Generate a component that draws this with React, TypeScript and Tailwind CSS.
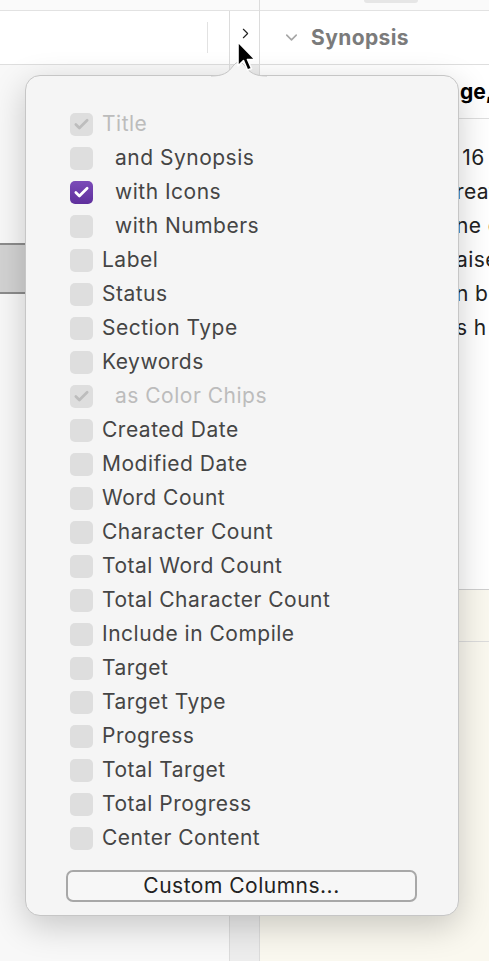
import { Check, ChevronDown, ChevronRight } from "lucide-react";

type Item = { label: string; indent?: boolean; checked?: boolean; disabled?: boolean };

const items: Item[] = [
  { label: "Title", checked: true, disabled: true },
  { label: "and Synopsis", indent: true },
  { label: "with Icons", indent: true, checked: true },
  { label: "with Numbers", indent: true },
  { label: "Label" },
  { label: "Status" },
  { label: "Section Type" },
  { label: "Keywords" },
  { label: "as Color Chips", indent: true, checked: true, disabled: true },
  { label: "Created Date" },
  { label: "Modified Date" },
  { label: "Word Count" },
  { label: "Character Count" },
  { label: "Total Word Count" },
  { label: "Total Character Count" },
  { label: "Include in Compile" },
  { label: "Target" },
  { label: "Target Type" },
  { label: "Progress" },
  { label: "Total Target" },
  { label: "Total Progress" },
  { label: "Center Content" },
];

// fragments of the synopsis text that peek out right of the popover
const synopsisLines = [" 16", "reat", "ne c", "aise", "n br", "s h"];

function Box({ item }: { item: Item }) {
  if (item.checked && !item.disabled) {
    return (
      <span className="flex h-[23px] w-[23px] shrink-0 items-center justify-center rounded-[5px] bg-gradient-to-b from-[#7b4bb8] to-[#5f2f9c]">
        <Check className="h-[17px] w-[17px] text-white" strokeWidth={3.8} />
      </span>
    );
  }
  return (
    <span className="flex h-[23px] w-[23px] shrink-0 items-center justify-center rounded-[5px] bg-[#dedede]">
      {item.checked && <Check className="h-[17px] w-[17px] text-[#bdbdbd]" strokeWidth={3.8} />}
    </span>
  );
}

export default function App() {
  return (
    <div className="relative h-[961px] w-[489px] overflow-hidden bg-white font-['Inter',sans-serif]">
      <div className="flex h-full">
        {/* left group: binder + strip */}
        <div className="flex w-[260px] shrink-0 flex-col border-r border-[#dcdcdc]">
          <div className="h-[11px] shrink-0 border-b border-[#e2e2e2] bg-[#fafafa]" />
          <div className="flex flex-1">
            <div className="flex w-[230px] shrink-0 flex-col border-r border-[#dcdcdc]">
              <div className="flex h-[54px] shrink-0 items-center justify-end border-b border-[#dedede] bg-white pr-[21px]">
                <div className="h-[31px] w-px bg-[#e2e2e2]" />
              </div>
              <div className="flex-1 bg-[#f8f8f8] pt-[178px]">
                <div className="h-[51px] border-y-2 border-[#8c8c8c] bg-[#d3d3d3]" />
              </div>
            </div>
            <div className="flex flex-1 flex-col">
              <div className="flex h-[54px] shrink-0 items-start justify-center border-b border-[#dedede] bg-white pt-[14px] pl-[1px]">
                <ChevronRight className="h-[17px] w-[17px] text-[#222]" strokeWidth={1.6} />
              </div>
              <div className="flex-1 bg-[#ededed]" />
            </div>
          </div>
        </div>

        {/* right pane: synopsis */}
        <div className="flex flex-1 flex-col">
          <div className="h-[11px] shrink-0 border-b border-[#e2e2e2] bg-[#fafafa] pl-[104px]">
            <div className="h-[3px] w-[54px] rounded-b-[6px] bg-[#e6e6e6]" />
          </div>
          <div className="flex h-[54px] shrink-0 items-center gap-[10px] border-b border-[#dedede] bg-white pl-[22px]">
            <ChevronDown className="h-[19px] w-[19px] text-[#a6a6a6]" strokeWidth={2} />
            <span className="text-[21px] font-bold tracking-[0.4px] text-[#7b7b7b]">Synopsis</span>
          </div>
          <div className="flex h-[54px] shrink-0 items-center border-b border-[#dedede] pl-[200px] text-[21px] font-bold whitespace-nowrap text-black">
            ge,
          </div>
          <div className="flex h-[471px] shrink-0 flex-col border-b border-[#cfcfcf] pt-[22px]">
            {synopsisLines.map((line) => (
              <div key={line} className="h-[34px] pl-[196px] text-[21px] leading-[34px] tracking-[0.4px] whitespace-pre text-[#222]">
                {line}
              </div>
            ))}
          </div>
          <div className="h-[52px] shrink-0 border-b border-[#dcdcdc] bg-[#faf8ef]" />
          <div className="flex-1 bg-[#faf8ef]" />
        </div>
      </div>

      {/* popover */}
      <div className="absolute top-[75px] left-[25px] flex h-[841px] w-[434px] flex-col rounded-[15px] border border-[#c6c6c6] bg-[#f5f5f5] pt-[31px] shadow-[0_10px_34px_rgba(0,0,0,0.2)]">
        <div className="flex flex-col pl-[44px]">
          {items.map((item) => (
            <div key={item.label} className="flex h-[34px] items-center">
              <Box item={item} />
              <span
                className={`text-[21px] tracking-[0.5px] whitespace-nowrap ${item.indent ? "pl-[22px]" : "pl-[9px]"} ${
                  item.disabled ? "text-[#bcbcbc]" : "text-[#454545]"
                }`}
              >
                {item.label}
              </span>
            </div>
          ))}
        </div>
        <div className="pt-[15px] pl-[40px]">
          <button className="flex h-[32px] w-[351px] items-center justify-center rounded-[7px] border-2 border-[#a8a8a8] bg-[#f7f7f7] text-[21px] tracking-[0.5px] text-[#222]">
            Custom Columns...
          </button>
        </div>
      </div>

      {/* popover arrow */}
      <svg className="absolute top-[58px] left-[211px]" width="56" height="19" viewBox="0 0 56 19">
        <path d="M0 18 C12 18 17 15 22 8 Q28 0 34 8 C39 15 44 18 56 18 L56 19 L0 19 Z" fill="#f5f5f5" />
        <path d="M0 18 C12 18 17 15 22 8 Q28 0 34 8 C39 15 44 18 56 18" fill="none" stroke="#c6c6c6" strokeWidth="1" />
      </svg>

      {/* mouse pointer */}
      <svg className="absolute top-[41px] left-[236px]" width="24" height="34" viewBox="0 0 24 34">
        <path
          d="M2 1 L2 25 L7.5 19.5 L11.5 29 L15.5 27.5 L11.5 18.5 L19 18.5 Z"
          fill="#000"
          stroke="#fff"
          strokeWidth="1.6"
          strokeLinejoin="round"
        />
      </svg>
    </div>
  );
}
